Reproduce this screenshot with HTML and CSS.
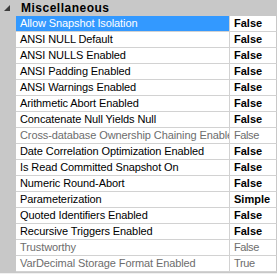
FILE: index.html
```html
<!DOCTYPE html>
<html lang="en">
<head>
  <meta charset="UTF-8" />
  <title>Properties</title>
  <link rel="stylesheet" href="styles.css">
</head>
<body>
  <div class="grid">
    <div class="category">
      <span class="toggle">
        <svg width="7" height="7" viewBox="0 0 7 7"><polygon points="6,0 6,6 0,6" fill="#3c3c3c" /></svg>
      </span>
      <span class="cat-label">Miscellaneous</span>
    </div>

    <div class="row selected">
      <div class="gutter"></div>
      <div class="name">Allow Snapshot Isolation</div>
      <div class="value">False</div>
    </div>
    <div class="row">
      <div class="gutter"></div>
      <div class="name">ANSI NULL Default</div>
      <div class="value">False</div>
    </div>
    <div class="row">
      <div class="gutter"></div>
      <div class="name">ANSI NULLS Enabled</div>
      <div class="value">False</div>
    </div>
    <div class="row">
      <div class="gutter"></div>
      <div class="name">ANSI Padding Enabled</div>
      <div class="value">False</div>
    </div>
    <div class="row">
      <div class="gutter"></div>
      <div class="name">ANSI Warnings Enabled</div>
      <div class="value">False</div>
    </div>
    <div class="row">
      <div class="gutter"></div>
      <div class="name">Arithmetic Abort Enabled</div>
      <div class="value">False</div>
    </div>
    <div class="row">
      <div class="gutter"></div>
      <div class="name">Concatenate Null Yields Null</div>
      <div class="value">False</div>
    </div>
    <div class="row readonly">
      <div class="gutter"></div>
      <div class="name">Cross-database Ownership Chaining Enabled</div>
      <div class="value">False</div>
    </div>
    <div class="row">
      <div class="gutter"></div>
      <div class="name">Date Correlation Optimization Enabled</div>
      <div class="value">False</div>
    </div>
    <div class="row">
      <div class="gutter"></div>
      <div class="name">Is Read Committed Snapshot On</div>
      <div class="value">False</div>
    </div>
    <div class="row">
      <div class="gutter"></div>
      <div class="name">Numeric Round-Abort</div>
      <div class="value">False</div>
    </div>
    <div class="row">
      <div class="gutter"></div>
      <div class="name">Parameterization</div>
      <div class="value">Simple</div>
    </div>
    <div class="row">
      <div class="gutter"></div>
      <div class="name">Quoted Identifiers Enabled</div>
      <div class="value">False</div>
    </div>
    <div class="row">
      <div class="gutter"></div>
      <div class="name">Recursive Triggers Enabled</div>
      <div class="value">False</div>
    </div>
    <div class="row readonly">
      <div class="gutter"></div>
      <div class="name">Trustworthy</div>
      <div class="value">False</div>
    </div>
    <div class="row readonly">
      <div class="gutter"></div>
      <div class="name">VarDecimal Storage Format Enabled</div>
      <div class="value">True</div>
    </div>
    <div class="footer"></div>
  </div>
</body>
</html>
```

FILE: styles.css
```css
body {
  margin: 0;
  background-color: #f0f0f0;
  font-family: 'Liberation Sans', Arial, sans-serif;
  font-size: 11px;
}
.grid {
  width: 277px;
  background-color: #ffffff;
}
.category {
  display: flex;
  align-items: center;
  height: 16px;
  background-color: #c8c8c8;
}
.toggle {
  width: 21px;
  display: flex;
  padding-left: 4px;
  box-sizing: border-box;
}
.cat-label {
  font-weight: bold;
  font-size: 12px;
  letter-spacing: 0.5px;
  color: #000;
}
.row {
  display: flex;
  height: 16px;
  line-height: 15px;
  color: #000;
}
.gutter {
  width: 16px;
  flex: none;
  background-color: #c8c8c8;
}
.name {
  width: 213px;
  flex: none;
  padding-left: 4px;
  box-sizing: border-box;
  border-bottom: 1px solid #d2d2d2;
  white-space: nowrap;
  overflow: hidden;
  letter-spacing: -0.1px;
}
.value {
  width: 48px;
  flex: none;
  padding-left: 4px;
  box-sizing: border-box;
  border-left: 1px solid #d2d2d2;
  border-bottom: 1px solid #d2d2d2;
  border-right: 1px solid #c8c8c8;
  font-weight: bold;
  white-space: nowrap;
  overflow: hidden;
}
.selected .name {
  background-color: #3399ff;
  color: #ffffff;
  background-clip: content-box;
  padding-left: 0;
  text-indent: 4px;
}
.readonly .name,
.readonly .value {
  color: #6d6d6d;
  font-weight: normal;
}
.readonly .value {
  letter-spacing: -0.4px;
}
.footer {
  height: 2px;
  border-top: 1px solid #c8c8c8;
  background-color: #f0f0f0;
}
```
